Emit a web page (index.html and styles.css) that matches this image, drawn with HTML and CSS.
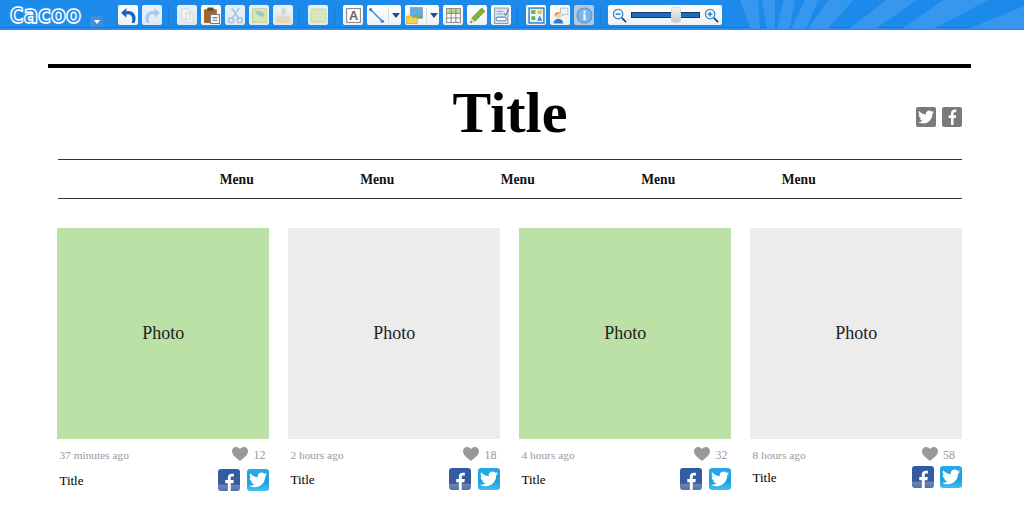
FILE: index.html
```html
<!DOCTYPE html>
<html lang="en">
<head>
    <meta charset="UTF-8">
    <meta name="viewport" content="width=device-width, initial-scale=1.0">
    <title>Cacoo</title>
    <link rel="stylesheet" href="styles.css">
</head>
<body>
    <svg class="defs" width="0" height="0">
        <symbol id="heart" viewBox="0 0 16 14">
            <path d="M8 14C3 10 0 7.500 0 4.200 0 1.800 1.800 0 4.100 0 5.700 0 7.200.8 8 2.200 8.800.8 10.300 0 11.900 0 14.200 0 16 1.800 16 4.200 16 7.500 13 10 8 14z"/>
        </symbol>
        <symbol id="bird" viewBox="0 0 24 24">
            <path d="M23.953 4.570a10 10 0 01-2.825.775 4.958 4.958 0 002.163-2.723c-.951.555-2.005.959-3.127 1.184a4.920 4.920 0 00-8.384 4.482C7.690 8.095 4.067 6.130 1.640 3.162a4.822 4.822 0 00-.666 2.475c0 1.710.870 3.213 2.188 4.096a4.904 4.904 0 01-2.228-.616v.060a4.923 4.923 0 003.946 4.827 4.996 4.996 0 01-2.212.085 4.936 4.936 0 004.604 3.417 9.867 9.867 0 01-6.102 2.105c-.390 0-.779-.023-1.170-.067a13.995 13.995 0 007.557 2.209c9.053 0 13.998-7.496 13.998-13.985 0-.210 0-.420-.015-.630A9.935 9.935 0 0024 4.590z"/>
        </symbol>
        <symbol id="eff" viewBox="0 0 24 24">
            <path d="M14.300 24V13.500h3.500l.6-4.200h-4.100V6.800c0-1.200.4-2 2.100-2h2.100V1.100C18.100 1 17 .9 15.700.9c-3 0-5.200 1.900-5.200 5.300v3.100H7v4.200h3.500V24z"/>
        </symbol>
    </svg>

    <header class="toolbar">
        <svg class="rays" viewBox="0 0 852 84" width="284" height="28">
            <path d="M0 0H55L60 84H30ZM65 0H105V84H80ZM130 0H165L150 84H112ZM195 0H235L200 84H155ZM265 0H340L265 84H205ZM440 0H530L410 84H330ZM610 0H745L585 84H490ZM852 18V84H690Z"/>
        </svg>

        <div class="logo"><span class="logo-cap">C</span>acoo</div>
        <div class="logo-menu"><i class="caret white"></i></div>

        <div class="tool-group first">
            <button class="tool">
                <svg viewBox="0 0 16 16"><path d="M6 1 1 5.500 6 10V7c3-.6 5 .6 5.500 3.500.2 1.500 0 3-.5 4.500h2.500c1.500-2.500 1.600-5.500.2-8C12.200 4.500 9.500 3.500 6 4z" fill="#1766b8"/></svg>
            </button>
            <button class="tool off">
                <svg viewBox="0 0 16 16"><path d="M10 1l5 4.500L10 10V7c-3-.6-5 .6-5.500 3.500-.2 1.500 0 3 .5 4.500H2.500C1 12.500.9 9.500 2.300 7 3.800 4.500 6.500 3.500 10 4z" fill="#a6cbee"/></svg>
            </button>
        </div>
        <span class="sep"></span>
        <div class="tool-group">
            <button class="tool off">
                <svg viewBox="0 0 16 16" fill="#eef2f6" stroke="#d3dbe3"><path d="M2.500 1.500h6l2 2v8h-8zM6.500 5.500h5l2 2v7h-7z"/></svg>
            </button>
            <button class="tool">
                <svg viewBox="0 0 16 16"><rect x="1" y="2" width="12" height="13" rx="1" fill="#a9651c"/><rect x="4" y="0.500" width="6" height="3" rx="1" fill="#5a4a35"/><rect x="7" y="7" width="8.500" height="8.500" fill="#f5f7fa" stroke="#6e7f90"/><path d="M9 10h4.500M9 12.500h4.500" stroke="#6e7f90"/></svg>
            </button>
            <button class="tool off">
                <svg viewBox="0 0 16 16" fill="none" stroke="#a9c8ea" stroke-width="1.600"><circle cx="4" cy="12.500" r="2.300"/><circle cx="12" cy="12.500" r="2.300"/><path d="M5 10.500 11.500 1M11 10.500 4.500 1"/></svg>
            </button>
            <button class="tool off">
                <svg viewBox="0 0 16 16"><rect x="1.500" y="1.500" width="13" height="13" fill="#d6e6b4" stroke="#c4d69e"/><path d="M4 3l5 1.500V3l4 4-3 3.500V9L6 7.500z" fill="#9ac8c0"/></svg>
            </button>
            <button class="tool off">
                <svg viewBox="0 0 16 16"><rect x="6" y="1" width="4" height="6" rx="1.500" fill="#d4d7d0"/><path d="M2 8h12l1 4H1z" fill="#dcdaca"/><rect x="1" y="12" width="14" height="3" fill="#efd6a8"/></svg>
            </button>
        </div>
        <span class="sep"></span>
        <div class="tool-group">
            <button class="tool off">
                <svg viewBox="0 0 16 16"><rect x="1" y="2" width="14" height="12" rx="1" fill="#d8e8b4" stroke="#c8dca4"/></svg>
            </button>
        </div>
        <span class="sep"></span>
        <div class="tool-group">
            <button class="tool">
                <svg viewBox="0 0 16 16"><rect x="1.500" y="1.500" width="13" height="13" fill="#fff" stroke="#888"/><text x="8" y="12.500" class="tool-letter">A</text></svg>
            </button>
            <button class="tool split">
                <svg viewBox="0 0 16 16"><path d="M2.500 2.500 13.500 13.500" stroke="#2a8ae6" stroke-width="1.300"/><circle cx="2.500" cy="2.500" r="1.600" fill="#2a8ae6"/><circle cx="13.500" cy="13.500" r="1.600" fill="#2a8ae6"/></svg>
                <i class="divider"></i>
                <i class="caret navy"></i>
            </button>
            <button class="tool split">
                <svg viewBox="0 0 16 16"><rect x="4" y="0.500" width="11.500" height="10" fill="#5fb0e0" stroke="#8a98a4" stroke-width=".7"/><path d="M5 10.500l4-4 2.500 2 4-1v3z" fill="#6aae70"/><path d="M.5 8.500h5l1 1.500h4v5.500H.5z" fill="#f8d24e" stroke="#d8a428" stroke-width=".7"/></svg>
                <i class="divider"></i>
                <i class="caret navy"></i>
            </button>
            <button class="tool">
                <svg viewBox="0 0 16 16"><rect x="1.500" y="1.500" width="13" height="13" fill="#fff" stroke="#8a8f88"/><rect x="2" y="2" width="12" height="4" fill="#bcd98a"/><path d="M1.500 6h13M1.500 10.300h13M5.800 1.500v13M10.200 1.500v13" stroke="#8a8f88" fill="none"/></svg>
            </button>
            <button class="tool">
                <svg viewBox="0 0 16 16"><path d="M12 1l3 3L5.500 13.500l-3-3z" fill="#7fb52e" stroke="#54821a" stroke-width=".6"/><path d="M2.500 10.500l3 3L1 15z" fill="#e3cfa0"/><path d="M1.800 13.200 3 14.400 1 15z" fill="#444"/></svg>
            </button>
            <button class="tool">
                <svg viewBox="0 0 16 16"><rect x="1.500" y="1" width="12.500" height="14.500" fill="#dfe6ef" stroke="#8d9cb0"/><path d="M3.500 4h6M3.500 6.500h5" stroke="#8d9cb0"/><rect x="3" y="9.500" width="9.500" height="3.500" rx="1.500" fill="#fff" stroke="#5d8cc0"/><path d="M10 6l2 1.500L15 2" fill="none" stroke="#5d8cc0" stroke-width="1.200"/></svg>
            </button>
        </div>
        <span class="sep"></span>
        <div class="tool-group">
            <button class="tool">
                <svg viewBox="0 0 16 16"><rect x="1" y="1" width="14" height="14" fill="#eaf3fb" stroke="#2a78bd" stroke-width="1.300"/><rect x="3" y="3" width="4" height="3.500" fill="#6db33f"/><rect x="9" y="3" width="4" height="3.500" fill="#f2c230"/><circle cx="5" cy="10.500" r="2" fill="#6db33f"/><path d="M11 8l2.500 5h-5z" fill="#3e8fd6"/></svg>
            </button>
            <button class="tool">
                <svg viewBox="0 0 16 16"><path d="M8 1h7v6h-3l-2 1.500V7H8z" fill="#eef0f2" stroke="#a8b0b8" stroke-width=".7"/><circle cx="6" cy="8" r="2.800" fill="#f7d4b0"/><path d="M2.500 9c-.4-3 2-5 5.500-3.500L4.500 7z" fill="#ee8420"/><path d="M1.500 15.500c0-3 2-4.200 4.500-4.200s4.500 1.200 4.500 4.200z" fill="#2a7fd0"/></svg>
            </button>
            <button class="tool selected">
                <svg viewBox="0 0 16 16"><circle cx="8" cy="8" r="7" fill="#7ab6ec" stroke="#4e94d8"/><rect x="7" y="6.500" width="2" height="6" fill="#fff"/><rect x="7" y="3.500" width="2" height="2" fill="#fff"/></svg>
            </button>
        </div>
        <span class="sep"></span>
        <div class="zoom-box">
            <svg class="zoom-icon" viewBox="0 0 16 16"><circle cx="6.500" cy="6.500" r="5" fill="#eef5fb" stroke="#3d8bc9" stroke-width="1.400"/><path d="M4 6.500h5" stroke="#1f6fb5" stroke-width="1.400"/><path d="M10.500 10.500 15 15" stroke="#1b4f80" stroke-width="2"/></svg>
            <div class="zoom-track"><span class="zoom-handle"></span></div>
            <svg class="zoom-icon" viewBox="0 0 16 16"><circle cx="6.500" cy="6.500" r="5" fill="#eef5fb" stroke="#3d8bc9" stroke-width="1.400"/><path d="M4 6.500h5M6.500 4v5" stroke="#1f6fb5" stroke-width="1.400"/><path d="M10.500 10.500 15 15" stroke="#1b4f80" stroke-width="2"/></svg>
        </div>
    </header>

    <main class="page">
        <div class="masthead">
            <h1>Title</h1>
            <div class="follow">
                <span class="follow-icon"><svg><use href="#bird"/></svg></span>
                <span class="follow-icon"><svg><use href="#eff"/></svg></span>
            </div>
        </div>

        <nav class="menu">
            <a>Menu</a>
            <a>Menu</a>
            <a>Menu</a>
            <a>Menu</a>
            <a>Menu</a>
        </nav>

        <section class="cards">
            <article class="card">
                <div class="photo green">Photo</div>
                <div class="meta">
                    <span class="age">37 minutes ago</span>
                    <span class="likes"><svg class="heart"><use href="#heart"/></svg>12</span>
                </div>
                <div class="foot">
                    <span class="card-title">Title</span>
                    <span class="share">
                        <span class="share-icon fb"><svg><use href="#eff"/></svg></span>
                        <span class="share-icon tw"><svg><use href="#bird"/></svg></span>
                    </span>
                </div>
            </article>
            <article class="card up-1">
                <div class="photo">Photo</div>
                <div class="meta">
                    <span class="age">2 hours ago</span>
                    <span class="likes"><svg class="heart"><use href="#heart"/></svg>18</span>
                </div>
                <div class="foot">
                    <span class="card-title">Title</span>
                    <span class="share">
                        <span class="share-icon fb"><svg><use href="#eff"/></svg></span>
                        <span class="share-icon tw"><svg><use href="#bird"/></svg></span>
                    </span>
                </div>
            </article>
            <article class="card up-1">
                <div class="photo green">Photo</div>
                <div class="meta">
                    <span class="age">4 hours ago</span>
                    <span class="likes"><svg class="heart"><use href="#heart"/></svg>32</span>
                </div>
                <div class="foot">
                    <span class="card-title">Title</span>
                    <span class="share">
                        <span class="share-icon fb"><svg><use href="#eff"/></svg></span>
                        <span class="share-icon tw"><svg><use href="#bird"/></svg></span>
                    </span>
                </div>
            </article>
            <article class="card up-2">
                <div class="photo">Photo</div>
                <div class="meta">
                    <span class="age">8 hours ago</span>
                    <span class="likes"><svg class="heart"><use href="#heart"/></svg>58</span>
                </div>
                <div class="foot">
                    <span class="card-title">Title</span>
                    <span class="share">
                        <span class="share-icon fb"><svg><use href="#eff"/></svg></span>
                        <span class="share-icon tw"><svg><use href="#bird"/></svg></span>
                    </span>
                </div>
            </article>
        </section>
    </main>
</body>
</html>
```

FILE: styles.css
```css
html, body {
    margin: 0;
    height: 100%;
    overflow: hidden;
}

body {
    background: #fff;
    color: #000;
    font-family: "Liberation Serif", "Times New Roman", serif;
}

.defs {
    position: absolute;
}

/* toolbar */
.toolbar {
    position: relative;
    box-sizing: border-box;
    height: 30px;
    display: flex;
    align-items: flex-start;
    padding: 5px 0 0 10px;
    background: #1b8aeb;
    border-bottom: 2px solid #2f8eec;
    box-shadow: inset 0 -1px 0 #1f6fd6;
}

.rays {
    position: absolute;
    top: 0;
    right: 0;
    fill: #3797ef;
}

.logo {
    position: relative;
    width: 73px;
    height: 20px;
    font: bold 25px/20px "DejaVu Sans", sans-serif;
    color: #1b8aeb;
    -webkit-text-stroke: 1.500px #fff;
    text-shadow: 0 0 3px rgba(255, 255, 255, 0.5);
    white-space: nowrap;
    transform: scaleX(0.87);
    transform-origin: left;
}

.logo-cap {
    font-size: 21px;
}

.logo-menu {
    width: 13px;
    height: 11px;
    margin: 11px 0 0 7px;
    background: #3d8fdc;
    display: flex;
    align-items: center;
    justify-content: center;
}

.caret {
    display: block;
    width: 0;
    height: 0;
    border-left: 4px solid transparent;
    border-right: 4px solid transparent;
    border-top: 5px solid #1d4f8c;
}

.caret.white {
    border-left-width: 3.500px;
    border-right-width: 3.500px;
    border-top: 4px solid #fff;
}

.tool-group {
    position: relative;
    display: flex;
    gap: 4px;
}

.tool-group.first {
    margin-left: 15px;
}

.sep {
    position: relative;
    width: 1px;
    height: 20px;
    margin: 0 8px 0 6px;
    background: #1a7ad6;
}

.tool {
    display: flex;
    align-items: center;
    justify-content: center;
    box-sizing: border-box;
    width: 20px;
    height: 20px;
    padding: 0;
    border: none;
    border-radius: 2px;
    background: linear-gradient(#fff, #eef1f4);
}

.tool svg {
    width: 17px;
    height: 17px;
    flex: none;
}

.tool.off {
    background: linear-gradient(#e9f2fb, #dde9f4);
}

.tool.selected {
    background: #b9c8d8;
}

.tool.split {
    width: 34px;
    padding-left: 1px;
    justify-content: flex-start;
}

.divider {
    display: block;
    width: 1px;
    height: 16px;
    margin: 0 3px 0 3px;
    background: #d4dbe2;
}

.tool-letter {
    font: bold 12px "Liberation Sans", sans-serif;
    fill: #666;
    text-anchor: middle;
}

.zoom-box {
    position: relative;
    box-sizing: border-box;
    width: 114px;
    height: 20px;
    margin-left: -1px;
    padding: 0 3px 0 4px;
    display: flex;
    align-items: center;
    justify-content: space-between;
    border-radius: 2px;
    background: linear-gradient(#fff, #eef1f4);
}

.zoom-icon {
    width: 15px;
    height: 15px;
}

.zoom-track {
    position: relative;
    box-sizing: border-box;
    width: 69px;
    height: 6px;
    background: #1d6cc4;
    border: 1px solid #123a66;
}

.zoom-handle {
    position: absolute;
    left: 40px;
    top: -5px;
    width: 8px;
    height: 14px;
    border-radius: 2px;
    background: linear-gradient(#f2f2f2, #c9c9c9);
    box-shadow: 0 0 0 1px #d8d8d8;
}

/* page */
.page {
    box-sizing: border-box;
    width: 923px;
    margin: 34px 0 0 48px;
    padding: 0 9px 0 10px;
    border-top: 4px solid #000;
}

.masthead {
    display: flex;
    justify-content: center;
    position: relative;
    height: 91px;
}

h1 {
    margin: 12px 0 0;
    font-size: 58px;
    line-height: 66px;
    font-weight: bold;
}

.follow {
    position: absolute;
    top: 39px;
    right: 0;
    display: flex;
    gap: 6px;
}

.follow-icon {
    display: flex;
    align-items: center;
    justify-content: center;
    width: 20px;
    height: 20px;
    border-radius: 2px;
    background: #7a7a7a;
    fill: #fff;
}

.follow-icon svg {
    width: 16px;
    height: 16px;
}

.menu {
    display: flex;
    height: 36px;
    padding: 2px 0 0 108.500px;
    align-items: center;
    border-top: 1px solid #333;
    border-bottom: 1px solid #333;
}

.menu a {
    width: 140.500px;
    text-align: center;
    font-size: 13.600px;
    font-weight: bold;
    color: #111;
}

.cards {
    display: grid;
    grid-template-columns: repeat(4, 1fr);
    gap: 19.500px;
    margin: 29px 0 0 -0.600px;
}

.photo {
    height: 211px;
    display: flex;
    align-items: center;
    justify-content: center;
    font-size: 18px;
    color: #222;
    background: #ececec;
}

.photo.green {
    background: #bbe1a6;
}

.meta {
    display: flex;
    justify-content: space-between;
    align-items: flex-end;
    height: 17px;
    margin-top: 7px;
    padding: 0 3.500px 0 2px;
    font-size: 12px;
    color: #999;
}

.age {
    padding-bottom: 2px;
    font-size: 11.400px;
}

.likes {
    display: flex;
    align-items: flex-end;
}

.heart {
    width: 16px;
    height: 14px;
    margin: 0 5px 2px 0;
    fill: #999;
}

.foot {
    display: flex;
    justify-content: space-between;
    align-items: center;
    height: 22px;
    margin-top: 6px;
    padding-left: 2px;
    font-size: 13px;
}

.card-title {
    padding-top: 2px;
}

.share {
    display: flex;
    gap: 6.500px;
}

.share-icon {
    display: flex;
    align-items: center;
    justify-content: center;
    width: 22px;
    height: 22px;
    border-radius: 3px;
    fill: #fff;
}

.share-icon svg {
    width: 18px;
    height: 18px;
}

.share-icon.fb {
    align-items: flex-end;
    background: linear-gradient(#2f5ca8 0, #3a5a98 70%, #6d86b8 72%, #5570a8 100%);
}

.share-icon.tw {
    background: linear-gradient(#28a8e8, #1ea0e0 60%, #42bff0);
}

.up-1 .foot {
    margin-top: 5px;
}

.up-2 .foot {
    margin-top: 3px;
}

.up-2 .meta {
    padding-right: 7px;
}
```
